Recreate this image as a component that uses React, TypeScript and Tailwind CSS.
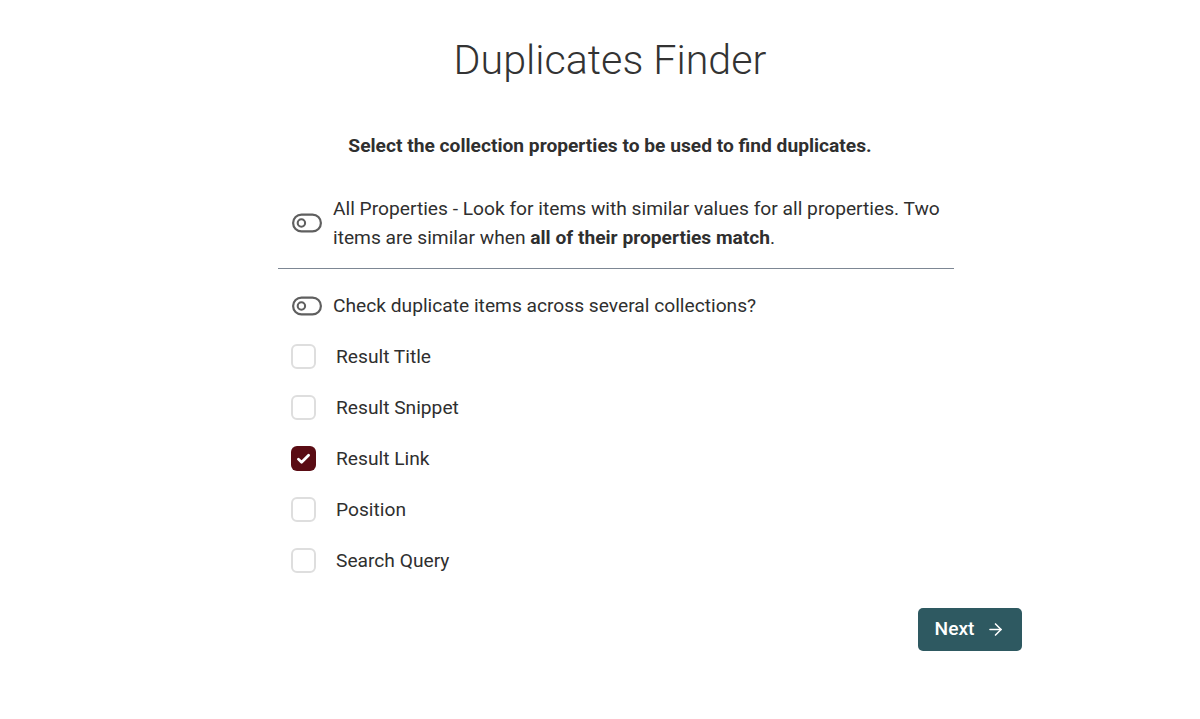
import * as React from 'react'
import {ArrowRight} from 'lucide-react'

const properties = [
    {label: 'Result Title', checked: false},
    {label: 'Result Snippet', checked: false},
    {label: 'Result Link', checked: true},
    {label: 'Position', checked: false},
    {label: 'Search Query', checked: false},
]

function ToggleOff() {
    return (
        <svg width="30" height="20" viewBox="0 0 30 20" className="shrink-0">
            <rect x="1.1" y="1.6" width="27.8" height="16.8" rx="8.4" fill="none" stroke="#5f5f5f" strokeWidth="2.2" />
            <circle cx="9.4" cy="10" r="3.7" fill="none" stroke="#5f5f5f" strokeWidth="2.1" />
        </svg>
    )
}

function Checkbox({checked}: {checked: boolean}) {
    return checked ? (
        <span className="flex h-[25px] w-[25px] shrink-0 items-center justify-center rounded-[6px] bg-[#5a0c14]">
            <svg width="17" height="17" viewBox="0 0 16 16">
                <path d="M3.2 8.6l3 3L12.8 5" fill="none" stroke="#fff" strokeWidth="2.6" strokeLinecap="round" strokeLinejoin="round" />
            </svg>
        </span>
    ) : (
        <span className="h-[25px] w-[25px] shrink-0 rounded-[6px] border-2 border-[#dedede] bg-white" />
    )
}

export default function App() {
    return (
        <div className="min-h-[719px] w-full bg-white font-['Roboto',sans-serif] text-[#2f2f2f]">
            <div className="flex justify-center pl-[100px]">
                <div className="flex w-[744px] flex-col">
                    <div className="flex w-[676px] flex-col">
                        <h1 className="pt-9 pr-3 text-center text-[41.2px] font-light leading-[48px] text-[#333]">
                            Duplicates Finder
                        </h1>
                        <p className="mt-12 pr-3 text-center text-[19.2px] font-bold leading-7">
                            Select the collection properties to be used to find duplicates.
                        </p>

                        <div className="mt-[34px] flex items-center gap-[11px] pl-[14px]">
                            <ToggleOff />
                            <p className="text-[19.2px] leading-[29px]">
                                All Properties - Look for items with similar values for all properties. Two items are similar when{' '}
                                <span className="font-bold">all of their properties match</span>.
                            </p>
                        </div>

                        <div className="mt-4 h-px w-full bg-[#7d8794]" />

                        <div className="mt-[11px] flex flex-col">
                            <div className="flex h-[51px] items-center gap-[11px] pl-[14px]">
                                <ToggleOff />
                                <span className="text-[19.2px] leading-7">Check duplicate items across several collections?</span>
                            </div>
                            {properties.map((p) => (
                                <label key={p.label} className="flex h-[51px] items-center gap-5 pl-[13px]">
                                    <Checkbox checked={p.checked} />
                                    <span className="text-[19.2px] leading-7">{p.label}</span>
                                </label>
                            ))}
                        </div>
                    </div>

                    <div className="mt-[22px] flex justify-end">
                        <button className="flex h-[43px] w-[104px] items-center justify-center gap-3 rounded-[5px] bg-[#2e5961] text-[19.2px] font-medium text-white">
                            Next
                            <ArrowRight size={19} strokeWidth={2} />
                        </button>
                    </div>
                </div>
            </div>
        </div>
    )
}
